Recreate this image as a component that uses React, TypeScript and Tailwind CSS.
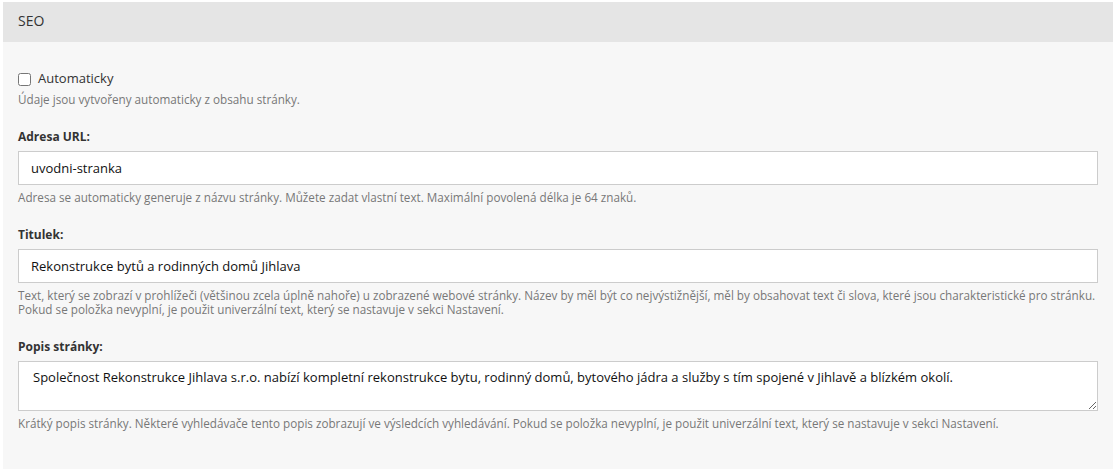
import React from "react";

const helpClass = "text-[11.7px] leading-[14px] text-[#777]";
const labelClass = "block text-[12px] leading-[19px] font-bold text-[#333] mb-[5px]";

function Field({
  label,
  value,
  help,
  multiline,
}: {
  label: string;
  value: string;
  help: React.ReactNode;
  multiline?: boolean;
}) {
  return (
    <div className="mt-[21px]">
      <label className={labelClass}>{label}</label>
      {multiline ? (
        <textarea
          defaultValue={value}
          className="block h-[50px] w-full border border-[#cccccc] bg-white px-[14px] py-[6px] text-[13px] leading-[18.5px] text-[#111] outline-none"
        />
      ) : (
        <input
          type="text"
          defaultValue={value}
          className="block h-[34px] w-full border border-[#cccccc] bg-white px-[12px] text-[13px] text-[#111] outline-none"
        />
      )}
      <p className={`${helpClass} mt-[5px]`}>{help}</p>
    </div>
  );
}

export default function App() {
  return (
    <div
      className="min-h-screen bg-white pt-[2px] pl-[3px] pr-[1px]"
      style={{ fontFamily: '"Open Sans", "Liberation Sans", sans-serif' }}
    >
      <div className="min-h-[467px] bg-[#f7f7f7]">
        <div className="h-[40px] bg-[#e5e5e5] px-[15px] pt-[10px] text-[14px] leading-[18.5px] text-[#333]">
          SEO
        </div>
        <div className="px-[15px] pt-[27px] pb-[15px]">
          <label className="flex items-start text-[13px] leading-[18.5px] text-[#333]">
            <input type="checkbox" className="m-0 mt-[4px] h-[13px] w-[13px]" />
            <span className="ml-[7px]">Automaticky</span>
          </label>
          <p className={`${helpClass} mt-[4px]`}>
            Údaje jsou vytvořeny automaticky z obsahu stránky.
          </p>

          <Field
            label="Adresa URL:"
            value="uvodni-stranka"
            help="Adresa se automaticky generuje z názvu stránky. Můžete zadat vlastní text. Maximální povolená délka je 64 znaků."
          />
          <Field
            label="Titulek:"
            value="Rekonstrukce bytů a rodinných domů Jihlava"
            help="Text, který se zobrazí v prohlížeči (většinou zcela úplně nahoře) u zobrazené webové stránky. Název by měl být co nejvýstižnější, měl by obsahovat text či slova, které jsou charakteristické pro stránku. Pokud se položka nevyplní, je použit univerzální text, který se nastavuje v sekci Nastavení."
          />
          <Field
            label="Popis stránky:"
            value="Společnost Rekonstrukce Jihlava s.r.o. nabízí kompletní rekonstrukce bytu, rodinný domů, bytového jádra a služby s tím spojené v Jihlavě a blízkém okolí."
            multiline
            help="Krátký popis stránky. Některé vyhledávače tento popis zobrazují ve výsledcích vyhledávání. Pokud se položka nevyplní, je použit univerzální text, který se nastavuje v sekci Nastavení."
          />
        </div>
      </div>
    </div>
  );
}
